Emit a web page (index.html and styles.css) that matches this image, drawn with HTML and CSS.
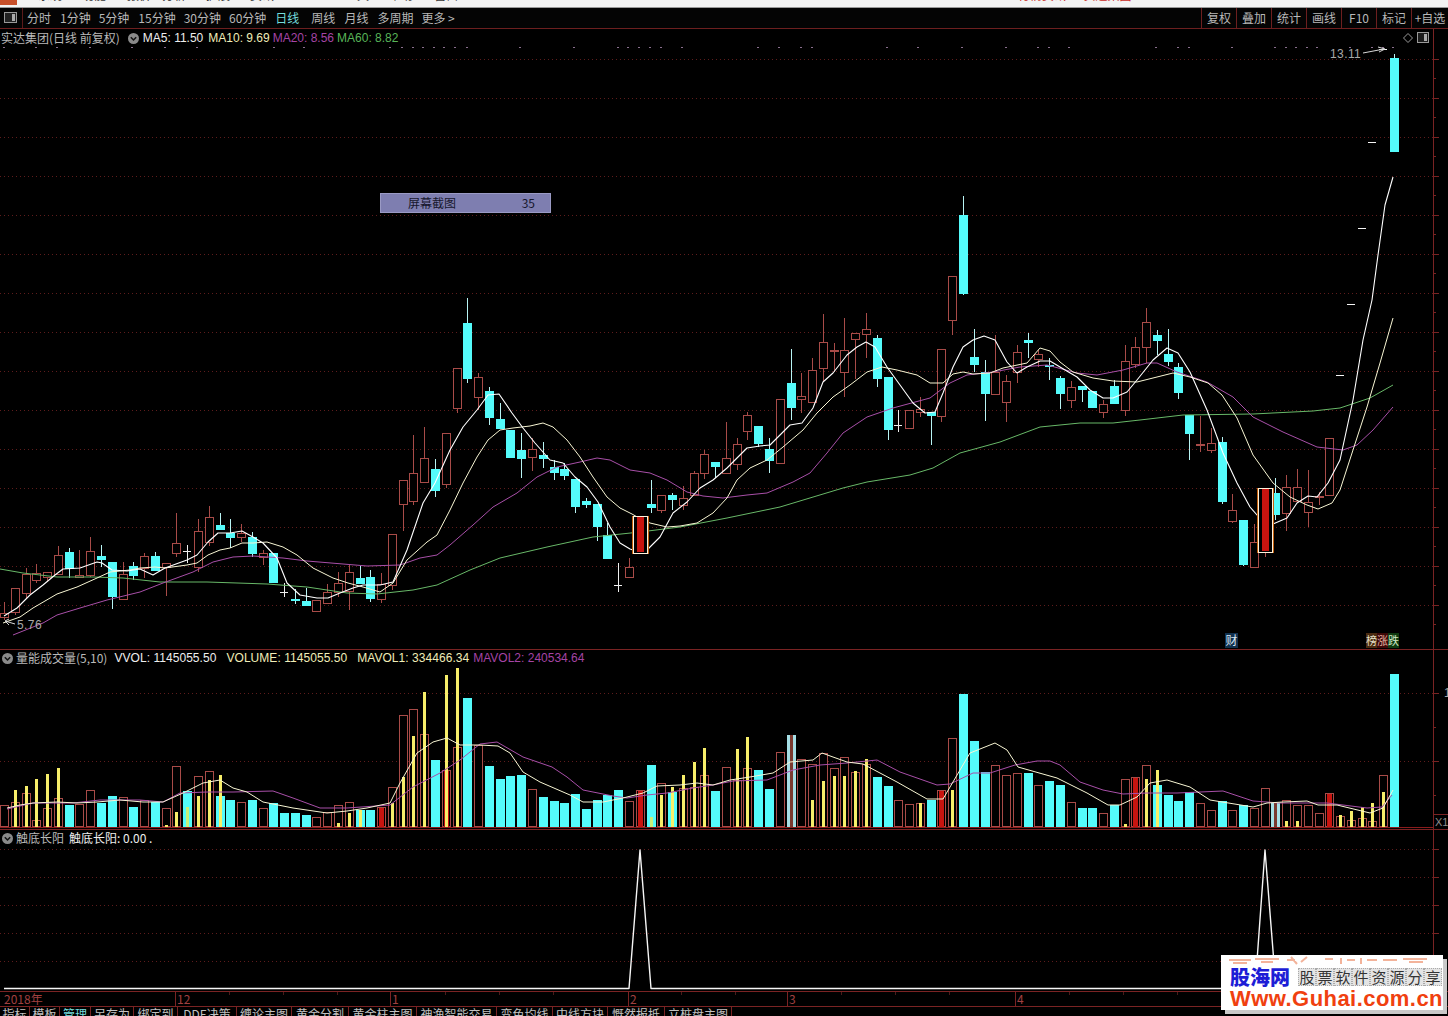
FILE: index.html
```html
<!DOCTYPE html>
<html lang="zh-CN">
<head>
<meta charset="utf-8">
<title>实达集团 日线</title>
<link rel="stylesheet" href="styles.css">
</head>
<body>
<div class="app">
  <div class="menubar">
    <div class="menu-left">
      <span class="logo"></span>
      <span class="m1">系统</span><span class="m2">功能</span><span class="m3">报价</span><span class="m4">分析</span><span class="m5">扩展</span><span class="m6">资讯</span><span class="m7">基金理财</span><span class="m8">工具</span><span class="m9">帮助</span><span class="m10">窗口</span>
    </div>
    <div class="menu-right">行情资讯 · 实达集团</div>
  </div>

  <div class="toolbar">
    <div class="periods">
      <span class="panel-btn"><svg width="13" height="11" viewBox="0 0 13 11"><rect x="0.5" y="0.5" width="12" height="10" fill="#222" stroke="#999"/><rect x="8" y="2" width="3" height="7" fill="#aaa"/></svg></span>
      <span>分时</span><span class="p-narrow">1分钟</span><span>5分钟</span><span class="p-narrow">15分钟</span><span class="p-narrow">30分钟</span><span>60分钟</span><span class="on">日线</span><span>周线</span><span>月线</span><span class="p-narrow">多周期</span><span>更多 &gt;</span>
    </div>
    <div class="tools">
      <span>复权</span><span>叠加</span><span>统计</span><span>画线</span><span>F10</span><span>标记</span><span class="last">+自选</span>
    </div>
  </div>

  <section class="pane pane-main">
    <svg class="chart" id="mainChart" viewBox="0 29 1448 620"></svg>
    <div class="pane-head head-main">
      <span class="name">实达集团(日线 前复权)</span>
      <svg class="chev" viewBox="0 0 11 11"><circle cx="5.5" cy="5.5" r="5.5" fill="#8a8a8a"/><path d="M2.8 4.2 5.5 7 8.2 4.2" fill="none" stroke="#111" stroke-width="1.5"/></svg>
      <span class="v-white">MA5: 11.50</span><span class="v-pale">MA10: 9.69</span><span class="v-purple">MA20: 8.56</span><span class="v-green">MA60: 8.82</span>
    </div>
    <div class="corner-icons">
      <svg width="10" height="10" viewBox="0 0 10 10"><path d="M5 .5 9.5 5 5 9.5 .5 5Z" fill="none" stroke="#999"/></svg>
      <svg width="12" height="11" viewBox="0 0 12 11"><rect x=".5" y=".5" width="11" height="10" fill="#1c1c1c" stroke="#999"/><rect x="7" y="2" width="3" height="7" fill="#aaa"/></svg>
    </div>
    <div class="tip"><span>屏幕截图</span><span>35</span></div>
    <span class="price high">13.11</span>
    <span class="price low">5.76</span>
    <span class="tag tag-cai">财</span>
    <span class="tags"><span class="t1">榜</span><span class="t2">涨</span><span class="t3">跌</span></span>
  </section>

  <section class="pane pane-vol">
    <svg class="chart" id="volChart" viewBox="0 650 1448 179"></svg>
    <div class="pane-head head-sub">
      <svg class="chev" viewBox="0 0 11 11"><circle cx="5.5" cy="5.5" r="5.5" fill="#8a8a8a"/><path d="M2.8 4.2 5.5 7 8.2 4.2" fill="none" stroke="#111" stroke-width="1.5"/></svg>
      <span class="name">量能成交量(5,10)</span>
      <span class="v-white vv">VVOL: 1145055.50</span><span class="v-pale vv">VOLUME: 1145055.50</span><span class="v-pale vv">MAVOL1: 334466.34</span><span class="v-purple vm">MAVOL2: 240534.64</span>
    </div>
    <span class="axis-one">1</span>
    <span class="x1">X1</span>
  </section>

  <section class="pane pane-sub">
    <svg class="chart" id="subChart" viewBox="0 830 1448 161"></svg>
    <div class="pane-head head-sub">
      <svg class="chev" viewBox="0 0 11 11"><circle cx="5.5" cy="5.5" r="5.5" fill="#8a8a8a"/><path d="M2.8 4.2 5.5 7 8.2 4.2" fill="none" stroke="#111" stroke-width="1.5"/></svg>
      <span class="name">触底长阳</span><span class="v-white sv">触底长阳: 0.00 .</span>
    </div>
  </section>

  <div class="timeaxis">
    <svg class="chart" id="axisChart" viewBox="0 992 1448 14"></svg>
    <span class="d d0">2018年</span><span class="d d1">12</span><span class="d d2">1</span><span class="d d3">2</span><span class="d d4">3</span><span class="d d5">4</span>
  </div>

  <div class="tabs">
    <span class="w30">指标</span><span class="w30">模板</span><span class="w31 on">管理</span><span class="w43">另存为</span><span class="w44">绑定到</span><span class="w59">DDE决策</span><span class="w55">缠论主图</span><span class="w57">黄金分割</span><span class="w68">黄金柱主图</span><span class="w80">神渔智能交易</span><span class="w56">变色均线</span><span class="w55">中线方块</span><span class="w57">慨然报抵</span><span class="w67">立桩盘主图</span>
  </div>

  <div class="watermark">
    <svg class="wm-faint" viewBox="0 0 222 10"><path d="M8 5h22M12 8h14M34 4h24M40 7h12M66 5h8M70 2l6 7M80 7l6-5M104 4h8M120 3v6M126 5h8M140 3v6M146 5h10M162 5h14M182 4h24M188 7h14" fill="none" stroke="#f3b39a" stroke-width="2"/></svg>
    <div class="wm-row">
      <span class="wm-brand">股海网</span>
      <span class="wm-slogan"><i>股</i><i>票</i><i>软</i><i>件</i><i>资</i><i>源</i><i>分</i><i>享</i></span>
    </div>
    <div class="wm-url">Www.Guhai.com.cn</div>
  </div>
</div>
<script src="script.js"></script>
</body>
</html>
```
FILE: styles.css
```css
* { box-sizing: border-box; }
html, body { margin: 0; padding: 0; background: #000; }
body {
  width: 1448px; height: 1016px; overflow: hidden;
  font: 12px/14px "Liberation Sans", "Noto Sans CJK SC", sans-serif;
  color: #bdbdbd;
}
.app { position: relative; display: flex; flex-direction: column; width: 1448px; height: 1016px; }

.menubar {
  height: 8px; flex: none; overflow: hidden; background: #f3f3f3;
  border-bottom: 1px solid #9a9a9a;
  display: flex; justify-content: space-between; color: #333;
  font-family: "Noto Sans CJK SC", sans-serif; line-height: 14px;
}
.menu-left { display: flex; margin-top: -12px; }
.menu-left .logo { width: 17px; height: 17px; margin-top: 0; background: #c8502a; }
.m1 { margin-left: 21px; } .m2 { margin-left: 20px; } .m3 { margin-left: 21px; } .m4 { margin-left: 11px; }
.m5 { margin-left: 20px; } .m6 { margin-left: 20px; } .m7 { margin-left: 17px; width: 40px; font-size: 10px; }
.m8 { margin-left: 14px; } .m9 { margin-left: 20px; } .m10 { margin-left: 21px; }
.menu-right { margin-top: -12px; margin-right: 298px; color: #c92a1e; width: 132px; white-space: nowrap; overflow: hidden; }

.toolbar {
  height: 21px; flex: none; display: flex; justify-content: space-between;
  border-bottom: 1px solid #6d1f1f; background: #040404;
  font-family: "Noto Sans CJK SC", sans-serif; line-height: 20px; color: #b8b8b8;
}
.periods { display: flex; gap: 9px; padding-left: 4px; }
.periods .p-narrow { margin-right: -1px; }
.panel-btn { width: 19px; margin-right: -5px; padding-top: 4px; border-right: 1px solid #5a1a1a; line-height: 0; }
.periods .on { color: #73dcdc; margin-right: 3px; }
.tools { display: flex; }
.tools span { width: 35px; text-align: center; border-left: 1px solid #6d1f1f; }
.tools .last { width: 37px; }

.pane { position: relative; flex: none; border-bottom: 1px solid #7a2323; }
.pane-main { height: 621px; }
.pane-vol { height: 180px; }
.pane-sub { height: 162px; }
.chart { position: absolute; left: 0; top: 0; width: 1448px; height: 100%; display: block; }

.pane-head {
  position: relative; display: flex; align-items: center; height: 16px;
  white-space: nowrap; font-size: 12px;
}
.head-main { padding-left: 1px; margin-top: 1px; }
.head-main .chev { margin: 0 4px 0 8px; }
.head-sub { margin-top: 0; padding-left: 2px; }
.head-sub .chev { margin-right: 3px; }
.chev { width: 11px; height: 11px; flex: none; }
.name { font-family: "Noto Sans CJK SC", sans-serif; color: #b9b9b9; }
.v-white { color: #eeeeee; } .v-pale { color: #f0edb8; } .v-purple { color: #a544a5; } .v-green { color: #58b558; }
.head-main span + span { margin-left: 3px; }
.head-main .v-white + .v-pale { margin-left: 5px; }
.vv { margin-left: 5px; margin-right: 5px; letter-spacing: .05px; }
.name + .vv { margin-left: 7px; }
.vm { margin-left: -1px; }
.sv { margin-left: 5px; font-family: "Noto Sans CJK SC", "Liberation Sans", sans-serif; }

.corner-icons { position: absolute; right: 19px; top: 3px; display: flex; gap: 4px; align-items: center; }
.tip {
  position: absolute; left: 380px; top: 164px; width: 171px; height: 20px;
  display: flex; justify-content: space-between; align-items: center; padding: 0 15px 0 27px;
  background: #7e7eb0; border: 1px solid #9a9ac4; color: #16162c;
  font-family: "Noto Sans CJK SC", sans-serif;
}
.price { position: absolute; color: #a9a9a9; font-size: 12px; letter-spacing: .4px; }
.price.high { left: 1330px; top: 18px; }
.price.low { left: 17px; top: 589px; }
.tag { position: absolute; font-family: "Noto Sans CJK SC", sans-serif; color: #d8e4f0; }
.tag-cai { left: 1225px; top: 604px; width: 13px; height: 15px; background: #10304e; text-align: center; }
.tags { position: absolute; left: 1366px; top: 604px; display: flex; height: 15px; font-family: "Noto Sans CJK SC", sans-serif; font-size: 11px; color: #e6e0c8; }
.tags span { width: 11px; text-align: center; }
.tags .t1 { background: #4a2a10; } .tags .t2 { background: #3c0808; color: #e9b0a0; } .tags .t3 { background: #0e3a10; color: #cfe8c4; }

.axis-one { position: absolute; left: 1444px; top: 36px; color: #a9a9a9; }
.x1 {
  position: absolute; right: 0; top: 164px; width: 15px; height: 15px;
  border-left: 1px solid #7a2323; border-top: 1px solid #7a2323; color: #8d8d8d; font-size: 11px; line-height: 14px; padding-left: 1px;
}

.timeaxis { position: relative; flex: none; height: 15px; border-bottom: 1px solid #7a2323; color: #a04040; }
.d { position: absolute; top: 0; line-height: 14px; font-family: "Noto Sans CJK SC", "Liberation Sans", sans-serif; }
.d0 { left: 4px; } .d1 { left: 177px; } .d2 { left: 392px; } .d3 { left: 630px; } .d4 { left: 789px; } .d5 { left: 1017px; }

.tabs {
  flex: none; height: 9px; overflow: hidden; display: flex; background: #000;
  font-family: "Noto Sans CJK SC", sans-serif; line-height: 13px; color: #c2c2c2;
}
.tabs span { text-align: center; border-right: 1px solid #7a2323; white-space: nowrap; overflow: hidden; }
.tabs .on { color: #73dcdc; }
.w30 { width: 30px; } .w31 { width: 31px; } .w43 { width: 43px; } .w44 { width: 44px; } .w59 { width: 59px; }
.w55 { width: 55px; } .w57 { width: 57px; } .w68 { width: 68px; } .w80 { width: 80px; } .w56 { width: 56px; } .w67 { width: 67px; }

.watermark {
  position: absolute; left: 1221px; top: 955px; width: 222px; height: 55px;
  background: #fff; box-shadow: 4px 4px 0 #c9c9c9; overflow: hidden;
}
.wm-faint { display: block; width: 222px; height: 10px; }
.wm-row { display: flex; align-items: center; height: 24px; padding-left: 9px; }
.wm-brand { font: 900 20px/24px "Noto Sans CJK SC", sans-serif; color: #1d1dd6; letter-spacing: 0; width: 60px; }
.wm-slogan { display: flex; margin-left: 8px; }
.wm-slogan i {
  width: 18px; height: 18px; font: 400 15px/18px "Noto Sans CJK SC", sans-serif; color: #333;
  text-align: center; background: #e4e4e4; outline: 1px dotted #aaa; outline-offset: -1px;
}
.wm-url { font: 700 22px/20px "Liberation Sans", sans-serif; color: #f0400f; padding-left: 9px; letter-spacing: .45px; white-space: nowrap; }
```
FILE: script.js
```js
var NS = 'http://www.w3.org/2000/svg';
var RED = '#a84b48', CYAN = '#54fbfb', YEL = '#f7ee6a', FILLRED = '#c8140f', GRID = '#5e1c1c', AXIS = '#7a2323';

function add(svg, tag, attrs) {
  var el = document.createElementNS(NS, tag);
  for (var k in attrs) el.setAttribute(k, attrs[k]);
  svg.appendChild(el);
  return el;
}
function X(i) { return Math.round(4 + 10.775 * i); }
function rect(svg, x, y, w, h, fill, stroke) {
  add(svg, 'rect', { x: x, y: y, width: w, height: h, fill: fill || 'none', stroke: stroke || 'none', 'shape-rendering': 'crispEdges' });
}
function vline(svg, x, y1, y2, c) {
  add(svg, 'line', { x1: x + .5, x2: x + .5, y1: y1, y2: y2, stroke: c, 'shape-rendering': 'crispEdges' });
}
function hline(svg, x1, x2, y, c, dash) {
  var a = { x1: x1, x2: x2, y1: y + .5, y2: y + .5, stroke: c, 'shape-rendering': 'crispEdges' };
  if (dash) a['stroke-dasharray'] = dash;
  add(svg, 'line', a);
}
function poly(svg, pts, c, w) {
  add(svg, 'polyline', { points: pts.map(function (p) { return p.join(','); }).join(' '), fill: 'none', stroke: c, 'stroke-width': w || 1, 'stroke-linejoin': 'round' });
}
function axisTicks(svg, ys, minor) {
  ys.forEach(function (y) { hline(svg, 1433, 1439, y, AXIS); });
  minor.forEach(function (y) { hline(svg, 1433, 1436, y, AXIS); });
}

/* [kind, high, bodyTop, bodyBottom, low]; r red hollow, c cyan, w white cross, B highlighted, d limit-up dash */
var CANDLES = [
['r',602,613,617,620],['r',588,588,612,615],['r',568,574,593,598],['r',564,573,580,583],['r',572,572,577,582],
['r',546,555,574,574],['c',548,552,569,578],['r',550,575,577,577],['r',537,551,575,577],['c',545,556,560,567],
['c',562,562,597,609],['r',562,574,599,599],['c',562,566,576,580],['r',553,556,568,578],['c',552,556,571,571],
['r',563,563,567,596],['r',513,543,553,557],['w',545,551,551,563],['r',519,531,567,572],['r',506,517,542,546],
['c',513,525,530,530],['c',519,533,538,548],['r',524,533,537,542],['c',532,537,554,557],['r',550,553,557,565],
['c',553,553,583,583],['w',583,592,592,597],['c',589,599,601,604],['c',588,601,606,606],['r',600,600,611,611],
['r',584,592,603,603],['r',572,583,592,597],['r',565,572,591,610],['c',566,578,584,584],['c',570,577,599,602],
['r',573,584,599,603],['r',534,534,585,590],['r',480,480,504,531],['r',435,473,501,505],['r',427,458,482,482],
['c',459,469,491,497],['r',433,433,484,488],['r',368,368,408,413],['c',298,323,379,383],['r',373,377,397,410],
['c',387,391,418,425],['c',403,419,429,429],['c',430,430,458,458],['c',433,450,459,478],['r',438,449,457,471],
['c',442,455,459,468],['c',460,467,473,480],['c',463,469,476,480],['c',479,479,507,513],['c',498,501,505,508],
['c',504,504,527,541],['c',523,535,559,559],['w',563,585,585,592],['r',558,567,577,577],['B',516,516,553,553],
['c',480,504,508,513],['r',495,495,510,513],['c',493,495,500,510],['r',486,498,505,510],['r',471,473,495,495],
['r',450,454,473,479],['c',462,462,467,478],['r',422,458,473,473],['r',438,444,464,470],['r',412,415,431,440],
['c',426,426,444,447],['c',438,449,461,473],['r',399,399,463,463],['c',349,383,408,420],['r',373,396,399,413],
['r',358,370,402,402],['r',314,342,368,382],['r',343,350,351,372],['r',318,350,372,397],['r',333,333,339,379],
['r',313,329,334,358],['c',335,338,379,387],['c',377,377,430,440],['w',410,425,425,432],['r',410,410,428,428],
['r',397,409,412,417],['c',412,412,416,445],['r',349,349,416,422],['r',276,276,320,335],['c',196,215,294,295],
['c',329,357,365,372],['c',360,372,394,421],['r',335,372,394,394],['r',375,381,402,422],['r',345,352,372,383],
['c',333,340,343,358],['r',350,354,359,367],['c',358,365,367,380],['c',376,378,394,409],['r',381,387,400,408],
['c',386,386,390,402],['c',391,391,408,408],['r',400,404,412,418],['c',380,386,404,404],['r',345,361,410,416],
['r',337,347,364,368],['r',308,322,347,363],['c',330,335,341,355],['c',329,354,362,366],['c',363,367,393,399],
['c',415,415,434,460],['r',416,444,445,452],['r',428,443,450,453],['c',437,442,502,504],['r',494,510,521,523],
['c',520,520,565,566],['r',524,542,567,567],['B',488,488,552,557],['c',478,493,515,520],['r',475,487,513,531],
['r',469,487,501,501],['r',470,502,512,527],['r',492,496,497,505],['r',438,438,495,495],
['d',375],['d',304],['d',228],['d',142],['d',49],['c',54,58,152,152]
];

var MA5 = [[4,616],[17,608],[30,595],[43,585],[55,575],[63,569],[80,568],[97,562],[102,563],[112,570],[127,571],[140,569],[153,575],[165,568],[187,560],[197,555],[208,542],[218,533],[230,533],[242,531],[253,537],[263,543],[277,558],[287,583],[300,595],[317,598],[328,598],[340,593],[353,588],[363,585],[380,585],[393,582],[407,550],[423,503],[435,483],[450,450],[463,427],[477,410],[488,395],[499,394],[512,413],[523,428],[535,443],[550,460],[563,463],[575,477],[587,487],[598,502],[610,527],[620,543],[630,549],[639,552],[648,549],[660,537],[673,513],[687,502],[700,488],[713,480],[727,468],[747,448],[760,446],[770,445],[780,435],[790,425],[802,423],[813,408],[823,382],[833,373],[847,355],[857,347],[866,342],[875,347],[887,367],[900,385],[913,403],[925,413],[935,412],[943,393],[953,367],[963,347],[973,340],[984,336],[995,340],[1007,362],[1017,373],[1027,367],[1040,361],[1050,361],[1060,367],[1077,377],[1090,390],[1103,398],[1113,398],[1127,392],[1137,380],[1153,360],[1167,348],[1178,353],[1190,372],[1207,410],[1223,453],[1237,483],[1250,507],[1257,515],[1273,524],[1287,518],[1297,503],[1308,496],[1317,497],[1328,483],[1340,460],[1353,400],[1363,340],[1372,300],[1378,255],[1385,205],[1393,177]];
var MA10 = [[3,623],[20,617],[33,608],[57,594],[77,587],[97,578],[110,572],[130,570],[140,568],[155,567],[165,568],[187,565],[197,563],[208,555],[220,550],[230,548],[242,543],[253,543],[267,542],[283,547],[297,555],[313,568],[333,578],[348,583],[363,587],[380,592],[393,583],[407,560],[427,542],[437,535],[450,510],[463,483],[477,457],[488,440],[500,430],[513,428],[530,426],[543,423],[553,427],[567,440],[580,457],[593,477],[607,497],[620,508],[632,514],[639,518],[650,523],[667,527],[680,526],[697,523],[713,513],[727,498],[737,480],[750,468],[767,460],[783,447],[803,430],[817,413],[833,397],[850,385],[867,372],[882,367],[897,370],[917,375],[930,383],[943,383],[953,374],[963,372],[973,374],[990,373],[1003,368],[1027,363],[1040,348],[1050,351],[1060,362],[1073,372],[1093,378],[1113,381],[1137,382],[1157,377],[1173,373],[1190,377],[1208,383],[1222,395],[1237,418],[1253,455],[1273,483],[1290,497],[1307,505],[1318,509],[1332,503],[1340,490],[1353,450],[1367,407],[1380,363],[1393,318]];
var MA20 = [[13,635],[43,623],[57,615],[80,608],[107,600],[140,592],[163,583],[193,572],[213,562],[233,557],[253,556],[283,558],[307,561],[343,564],[367,566],[400,565],[420,558],[437,555],[450,545],[473,525],[493,507],[517,493],[537,477],[557,467],[580,462],[597,458],[610,460],[630,470],[650,473],[667,480],[687,492],[703,496],[723,498],[747,495],[767,493],[793,482],[810,473],[827,453],[843,433],[867,417],[893,408],[930,398],[950,383],[967,375],[993,372],[1020,367],[1047,365],[1077,373],[1097,375],[1123,370],[1147,363],[1157,363],[1177,372],[1207,382],[1233,397],[1253,417],[1283,432],[1317,447],[1343,450],[1357,445],[1373,430],[1393,407]];
var MA60 = [[0,569],[23,573],[57,577],[93,577],[123,578],[160,582],[207,582],[267,584],[307,587],[347,593],[377,594],[413,590],[437,585],[470,570],[500,558],[547,547],[593,537],[640,532],[680,527],[727,518],[780,507],[843,488],[867,482],[910,475],[933,468],[960,453],[1000,442],[1040,427],[1080,423],[1113,423],[1140,420],[1183,415],[1253,414],[1313,411],[1340,408],[1370,398],[1393,385]];

/* [kind, barTop, yellowTop] */
var VOLS = [
['r',805],['r',802,790],['r',793,786],['r',820,779],['r',808,774],['r',798,768],['c',805],['r',804],['r',790],['c',803],
['c',796],['r',797],['c',807],['r',800],['c',802],['r',808,825],['r',766,812],['c',791,807],['r',776,796],['r',771,780],
['c',796,775],['c',800],['r',802],['c',800],['r',808],['c',803],['c',813],['c',813],['c',815],['r',817],
['r',812],['r',805,823],['r',802,813],['c',810,810],['c',810],['R',807],['r',787,803],['r',715,777],['r',709,736],['r',734,692],
['c',760],['R',770,675],['r',747,668],['c',698],['r',745],['c',766],['c',779],['c',776],['c',775],['r',789],
['c',797],['c',801],['c',803],['c',794],['c',809],['c',800],['c',795],['c',790],['r',801],['R',790],
['c',765,817],['r',783,795],['c',792,787],['r',788,775],['r',787,762],['r',775,748],['c',791],['r',767],['r',780,749],['r',768,737],
['c',770],['c',789],['r',752],['P',735],['r',759],['r',764,800],['r',753,781],['r',768,776],['r',757,776],['r',772,771],
['r',764,759],['c',777],['c',786],['r',800],['r',804],['r',803,803],['c',800],['R',790],['r',738,790],['c',694],
['c',741],['c',772],['r',765],['r',775],['r',773],['c',773],['r',785],['c',781],['c',785],['r',802],
['c',808],['c',808],['r',813],['c',805],['r',779,824],['R',777],['r',765,779],['c',785,770],['c',795],['c',801],
['c',792],['r',803],['r',810],['c',801],['r',810],['c',805],['r',808],['r',788],['P',803],['r',800,821],
['r',805,821],['r',805],['r',813],['R',793],['r',816,815],['r',820,811],['r',818,807],['r',821,803],['r',775,792],['c',674]
];
var VM1 = [[7,808],[20,805],[33,803],[57,802],[77,803],[97,802],[120,800],[143,802],[163,802],[183,793],[203,783],[220,780],[233,788],[247,792],[263,802],[293,808],[327,813],[347,811],[367,808],[390,803],[400,783],[417,753],[433,742],[447,738],[460,745],[480,745],[498,746],[510,753],[523,772],[540,782],[570,795],[583,802],[603,802],[623,798],[643,793],[657,786],[680,785],[697,783],[713,785],[730,780],[750,777],[773,773],[790,762],[813,760],[822,753],[833,757],[847,762],[863,764],[897,782],[927,799],[943,799],[960,770],[970,753],[995,743],[1007,750],[1018,767],[1057,778],[1087,793],[1108,805],[1120,805],[1137,797],[1150,783],[1167,780],[1190,787],[1210,800],[1253,807],[1267,803],[1283,802],[1307,801],[1318,805],[1337,805],[1370,813],[1383,808],[1393,790]];
var VM2 = [[7,809],[33,803],[73,803],[100,800],[140,800],[163,802],[180,793],[207,792],[233,792],[273,791],[293,798],[320,808],[347,808],[390,805],[413,787],[440,773],[460,760],[480,744],[497,742],[523,757],[552,767],[567,777],[583,790],[613,796],[627,798],[647,795],[667,793],[693,788],[713,785],[733,781],[767,780],[793,770],[820,765],[847,763],[877,760],[900,772],[937,785],[950,784],[973,773],[990,773],[1015,765],[1037,761],[1050,761],[1060,765],[1080,782],[1103,790],[1123,794],[1147,793],[1177,793],[1223,791],[1253,801],[1280,803],[1327,803],[1367,808],[1382,807],[1392,795]];

/* ---------- main pane ---------- */
var main = document.getElementById('mainChart');
var y;
for (y = 59; y <= 605; y += 39) hline(main, 0, 1433, y, GRID, '1 3');
[574,618,628,639,650,661,682,758,779,801,812,887,918,962,1006,1038,1049,1069,1156,1178,1189,1232,1275,1286,1296,1307,1317,1350,1372,1383,1393,4,36,57,90,132,165,197,274,304,390,402,413,423,434,444,455,467,520]
  .forEach(function (x) { rect(main, x - 1, 47, 2, 1, '#8a6f8e'); });
vline(main, 1433, 29, 650, AXIS);
var ticks = [], minors = [];
for (y = 59; y <= 605; y += 39) { ticks.push(y); minors.push(y + 19); }
axisTicks(main, ticks, minors);

CANDLES.forEach(function (c, i) {
  var x = X(i), k = c[0];
  if (k === 'd') { hline(main, x - 4, x + 4, c[1], '#f4f4f4'); return; }
  if (k === 'w') {
    vline(main, x, c[1], c[4], '#f0f0f0');
    hline(main, x - 4, x + 4, c[2], '#f0f0f0');
    return;
  }
  if (k === 'c') {
    if (c[1] < c[2]) vline(main, x, c[1], c[2], '#b8f4f4');
    if (c[4] > c[3]) vline(main, x, c[3], c[4], '#b8f4f4');
    rect(main, x - 4, c[2], 9, Math.max(c[3] - c[2], 2), CYAN);
    return;
  }
  if (k === 'r') {
    if (c[1] < c[2]) vline(main, x, c[1], c[2], RED);
    if (c[4] > c[3]) vline(main, x, c[3], c[4], RED);
    rect(main, x - 3.5, c[2] + .5, 8, Math.max(c[3] - c[2], 1), '#000', RED);
  }
});

poly(main, MA60, '#68b868');
poly(main, MA20, '#a84fa8');
poly(main, MA10, '#f8f6d4');
poly(main, MA5, '#ffffff', 1.1);

CANDLES.forEach(function (c, i) {
  if (c[0] !== 'B') return;
  var x = X(i);
  if (c[4] > c[3]) vline(main, x, c[3], c[4], RED);
  rect(main, x - 8, c[2], 17, c[3] - c[2] + 1, '#c2600e');
  rect(main, x - 7, c[2], 14, c[3] - c[2], '#000', '#fff2dc');
  rect(main, x - 3, c[2] + 1, 7, c[3] - c[2] - 2, FILLRED);
});

/* price callouts */
poly(main, [[1363,53],[1384,49]], '#d8d8d8');
poly(main, [[1378,47],[1385,49],[1379,52]], '#d8d8d8');
poly(main, [[5,621],[15,624]], '#d8d8d8');
poly(main, [[9,619],[5,621],[9,625]], '#d8d8d8');

/* ---------- volume pane ---------- */
var vol = document.getElementById('volChart');
hline(vol, 0, 1433, 693, GRID, '1 3');
hline(vol, 0, 1433, 761, GRID, '1 3');
vline(vol, 1433, 650, 830, AXIS);
axisTicks(vol, [693, 761], [727, 795]);
var BASE = 827;
VOLS.forEach(function (v, i) {
  var x = X(i), k = v[0], t = v[1];
  if (k === 'r') rect(vol, x - 3.5, t + .5, 8, BASE - t - 1, '#000', RED);
  if (k === 'c') rect(vol, x - 4, t, 9, BASE - t, CYAN);
  if (k === 'R') {
    rect(vol, x - 3.5, t + .5, 8, BASE - t - 1, '#000', RED);
    rect(vol, x - 2, t + 1, 5, BASE - t - 1, FILLRED);
  }
  if (k === 'P') {
    rect(vol, x - 4, t, 9, BASE - t, '#a6dfe6');
    rect(vol, x - 1, t, 3, BASE - t, '#7a3a30');
  }
  if (v[2]) rect(vol, x - 1, v[2], 3, BASE - v[2], k === 'c' && v[2] > t ? '#c8f07a' : YEL);
});
poly(vol, VM2, '#a84fa8');
poly(vol, VM1, '#f8f6d4');
hline(vol, 0, 1433, 827, '#8a1c1c');

/* ---------- indicator pane ---------- */
var sub = document.getElementById('subChart');
[849, 877, 905, 933, 961].forEach(function (g) { hline(sub, 0, 1433, g, GRID, '1 3'); });
vline(sub, 1433, 830, 992, AXIS);
axisTicks(sub, [849, 877, 905, 933, 961], []);
poly(sub, [[4,988.5],[629,988.5],[640,850],[651,988.5],[1255,988.5],[1265,850],[1276,988.5],[1393,988.5]], '#f6f6f6', 1.4);

/* ---------- time axis ---------- */
var ax = document.getElementById('axisChart');
[175, 390, 628, 787, 1015].forEach(function (x) { vline(ax, x, 992, 1006, AXIS); });
[229, 283, 337, 445, 499, 553, 681, 735, 841, 895, 949, 1069, 1123, 1177, 1285, 1339].forEach(function (x) { vline(ax, x, 992, 995, '#4a1a1a'); });
vline(ax, 1433, 992, 1006, AXIS);
```
